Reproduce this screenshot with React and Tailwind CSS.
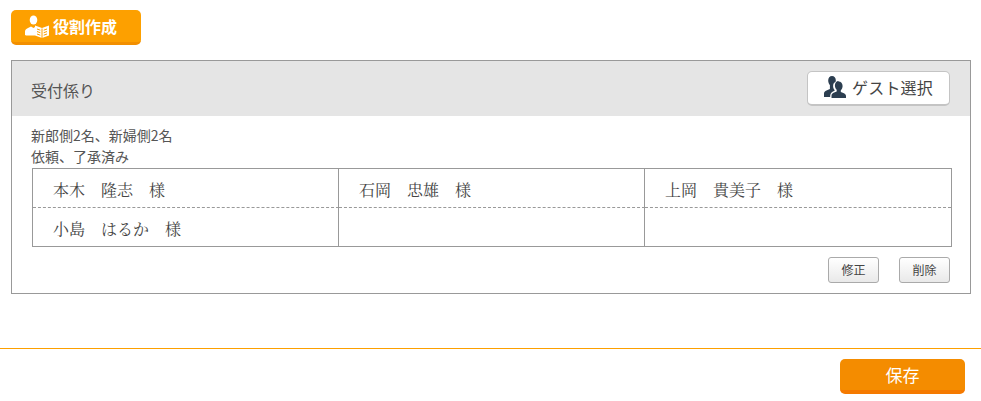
const sans = "font-['Meiryo','Noto_Sans_CJK_JP','Noto_Sans',sans-serif]";

function BookPersonIcon() {
  return (
    <svg width="26" height="24" viewBox="0 0 26 24" fill="none">
      <ellipse cx="8.500" cy="6" rx="3.800" ry="4.500" fill="#fff" />
      <path d="M0 21v-3.500c0-2 1.500-3 3.500-3.800L6 12.500l2.500 1.500 1.500-1v8.500H2c-1.200 0-2-.2-2-.5z" fill="#fff" />
      <path d="M10 11.500l7 2.500 7-2.500v10l-7 2.500-7-2.500z" fill="#fff" />
      <path d="M17 14.500V24M12 15l3.300 1.200M12 17.500l3.300 1.200M12 20l3.300 1.200M18.700 16.200l3.300-1.200M18.700 18.700l3.300-1.200M18.700 21.200l3.300-1.200" stroke="#fda000" strokeWidth="1" />
    </svg>
  );
}

function GuestIcon() {
  return (
    <svg width="22" height="22" viewBox="0 0 22 22" fill="#2c3e50">
      <path d="M8 0c2.300 0 3.800 1.800 3.800 4.200 0 .6-.1 1.100-.2 1.600-1.500.6-2.500 2.200-2.500 4.300 0 1.600.6 3 1.500 4v.6c-2.200.9-4.400 2.400-4.400 5V21H0v-3.500c0-1.600 1-2.500 2.500-3.100l3.400-1.400V9C4.900 8.100 4.200 6.300 4.200 4.500 4.200 1.900 5.700 0 8 0z" />
      <path d="M14.500 5.500c2.500 0 4.100 1.900 4.100 4.500 0 1.800-.8 3.300-1.800 4.200v1.700l2.500 1c1.600.7 2.700 1.500 2.700 3.100V22H7.500v-2.500c0-1.600 1.100-2.400 2.700-3.100l2.500-1v-1.700c-1-.9-1.800-2.400-1.800-4.200 0-2.600 1.600-4.500 3.600-4.500z" />
    </svg>
  );
}

function NameCell({ name, last, top }) {
  return (
    <div className={`flex items-center pl-[20px] pt-[4px] font-['Noto_Serif_CJK_JP','Liberation_Serif','Noto_Sans_CJK_JP',serif] text-[16px] text-[#444] ${last ? "" : "border-r border-r-[#999]"} ${top ? "border-b border-b-[#999] [border-bottom-style:dashed]" : ""}`}>
      {name}
    </div>
  );
}

function SmallButton({ children }) {
  return (
    <button className="h-[26px] w-[51px] rounded-[3px] border border-[#aaa] bg-gradient-to-b from-white to-[#e9e9e9] text-[12px] text-[#444]">
      {children}
    </button>
  );
}

export default function App() {
  return (
    <div className={`h-[401px] w-[981px] overflow-hidden bg-white ${sans}`}>
      <div className="pl-[11px] pt-[10px]">
        <button className="flex h-[35px] w-[130px] items-center gap-[2px] rounded-[5px] border-b-[3px] border-[#f28f00] bg-[#fda000] pl-[14px] text-[16px] font-bold text-white">
          <BookPersonIcon />
          <span>役割作成</span>
        </button>
      </div>

      {/* 受付係り */}
      <section className="ml-[11px] mt-[15px] h-[234px] w-[960px] border border-[#999]">
        <div className="flex h-[55px] items-start justify-between bg-[#e5e5e5] pl-[19px] pr-[20px]">
          <h2 className="pt-[17px] text-[16px] font-normal text-[#555]">受付係り</h2>
          <button className="mt-[10px] flex h-[35px] w-[143px] items-center justify-center gap-[6px] rounded-[5px] border border-b-2 border-[#c4c4c4] bg-white pb-[2px] text-[16px] tracking-[0.2px] text-[#444]">
            <GuestIcon />
            <span>ゲスト選択</span>
          </button>
        </div>

        <div className="px-[20px]">
          <div className="-ml-[1px] mt-[9px] text-[14px] leading-[21px] text-[#555]">
            <p>新郎側2名、新婦側2名</p>
            <p>依頼、了承済み</p>
          </div>

          <div className="mt-[1px] grid h-[79px] w-[920px] grid-cols-[306px_306px_1fr] grid-rows-2 border border-[#999]">
            <NameCell name="本木　隆志　様" top />
            <NameCell name="石岡　忠雄　様" top />
            <NameCell name="上岡　貴美子　様" last top />
            <NameCell name="小島　はるか　様" />
            <NameCell name="" />
            <NameCell name="" last />
          </div>

          <div className="mt-[10px] flex justify-end gap-[20px]">
            <SmallButton>修正</SmallButton>
            <SmallButton>削除</SmallButton>
          </div>
        </div>
      </section>

      {/* フッター */}
      <footer className="mt-[54px] flex justify-end border-t border-[#fda000] pr-[16px] pt-[10px]">
        <button className="h-[35px] w-[125px] rounded-[5px] border-b-[4px] border-[#f57a00] bg-[#f48c00] text-[17px] font-normal text-white">
          保存
        </button>
      </footer>
    </div>
  );
}
